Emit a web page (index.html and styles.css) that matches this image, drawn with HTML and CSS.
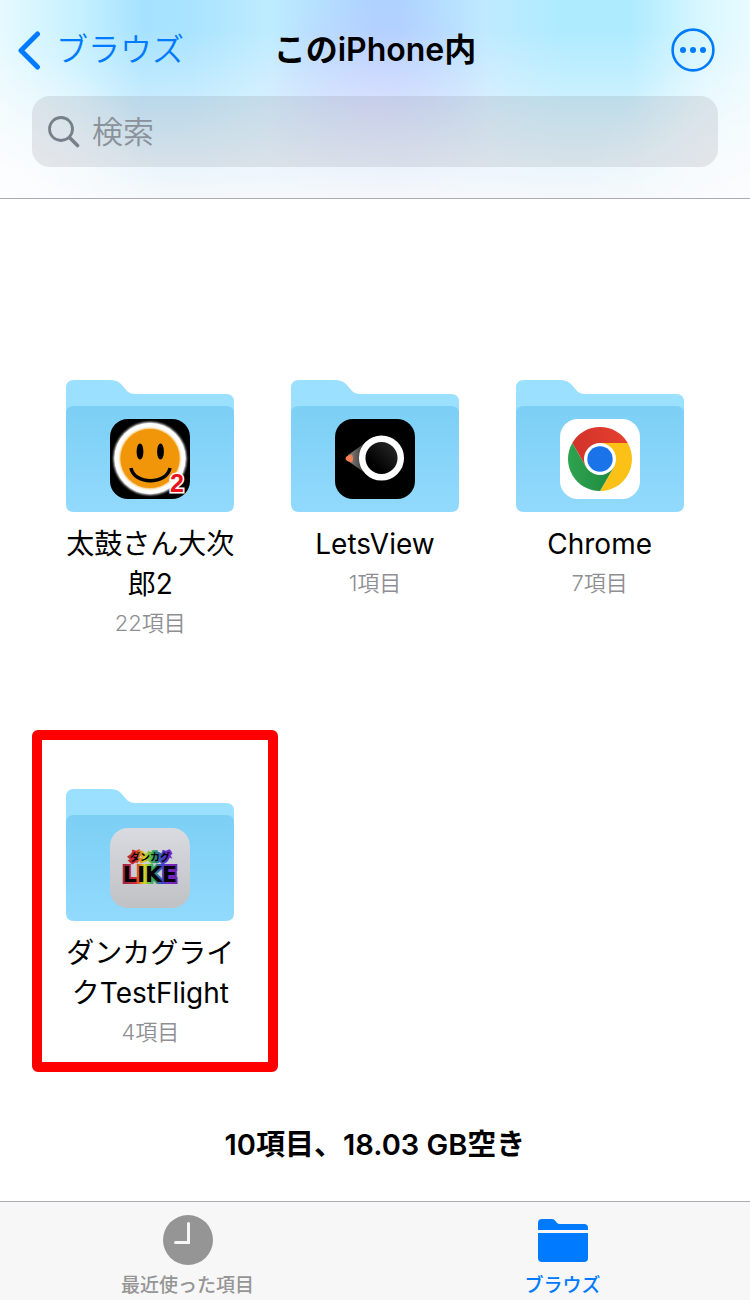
FILE: index.html
```html
<!DOCTYPE html>
<html lang="ja">
<head>
    <meta charset="UTF-8">
    <meta name="viewport" content="width=device-width, initial-scale=1.0">
    <title>このiPhone内</title>
    <link rel="stylesheet" href="styles.css">
</head>
<body>

    <!-- Shared folder shape -->
    <svg class="defs" width="0" height="0" aria-hidden="true">
        <defs>
            <linearGradient id="front" x1="0" y1="0" x2="0" y2="1">
                <stop offset="0" stop-color="#7ccff5"/>
                <stop offset="1" stop-color="#92dafd"/>
            </linearGradient>
            <linearGradient id="silver" x1="0" y1="0" x2="0" y2="1">
                <stop offset="0" stop-color="#d9dbe1"/>
                <stop offset="1" stop-color="#bfc1c5"/>
            </linearGradient>
            <linearGradient id="rainbow" gradientUnits="userSpaceOnUse" x1="11" y1="0" x2="69" y2="0">
                <stop offset="0" stop-color="#8e2450"/>
                <stop offset="0.25" stop-color="#d8282c"/>
                <stop offset="0.4" stop-color="#d9d320"/>
                <stop offset="0.55" stop-color="#2fae55"/>
                <stop offset="0.7" stop-color="#3a45c4"/>
                <stop offset="0.85" stop-color="#7c22c4"/>
                <stop offset="1" stop-color="#6d2a9a"/>
            </linearGradient>
            <linearGradient id="beam" x1="0" y1="0" x2="1" y2="0">
                <stop offset="0" stop-color="#8a8480"/>
                <stop offset="1" stop-color="#333"/>
            </linearGradient>
            <linearGradient id="lens" x1="0" y1="1" x2="1" y2="0">
                <stop offset="0.3" stop-color="#000"/>
                <stop offset="1" stop-color="#333"/>
            </linearGradient>
            <linearGradient id="chromeRed" x1="0" y1="0" x2="1" y2="0">
                <stop offset="0" stop-color="#d23329"/>
                <stop offset="1" stop-color="#e5402f"/>
            </linearGradient>
            <linearGradient id="chromeGreen" x1="0" y1="0" x2="1" y2="0">
                <stop offset="0" stop-color="#2fa350"/>
                <stop offset="1" stop-color="#1e8a3e"/>
            </linearGradient>
            <filter id="glow" x="-20%" y="-20%" width="140%" height="140%">
                <feGaussianBlur stdDeviation="1.2"/>
            </filter>
            <symbol id="folder" viewBox="0 0 168 132">
                <path fill="#9ce0ff" d="M0 8Q0 0 8 0H44Q51 0 55 4L61 11Q64 14 69 14H160Q168 14 168 22V60H0Z"/>
                <path fill="url(#front)" d="M0 34Q0 26 8 26H160Q168 26 168 34V124Q168 132 160 132H8Q0 132 0 124Z"/>
            </symbol>
        </defs>
    </svg>

    <header class="header">
        <nav class="navbar">
            <a class="back" href="#browse">
                <svg width="24" height="40" viewBox="0 0 24 40" aria-hidden="true">
                    <path d="M19.500 4L3 20.500L19.500 37" fill="none" stroke="currentColor" stroke-width="5" stroke-linecap="round" stroke-linejoin="round"/>
                </svg>
                <span>ブラウズ</span>
            </a>
            <h1 class="title">このiPhone内</h1>
            <button class="more" type="button" aria-label="その他">
                <svg width="44" height="44" viewBox="0 0 44 44" aria-hidden="true">
                    <circle cx="22" cy="22" r="20.400" fill="none" stroke="currentColor" stroke-width="2.600"/>
                    <g fill="currentColor">
                        <circle cx="12" cy="22" r="3"/>
                        <circle cx="22" cy="22" r="3"/>
                        <circle cx="32" cy="22" r="3"/>
                    </g>
                </svg>
            </button>
        </nav>
        <label class="search">
            <svg width="32" height="32" viewBox="0 0 32 32" aria-hidden="true">
                <circle cx="13" cy="13" r="11.500" fill="none" stroke="currentColor" stroke-width="2.800"/>
                <path d="M21.500 21.500L29.500 29.500" stroke="currentColor" stroke-width="3.600" stroke-linecap="round"/>
            </svg>
            <input type="search" placeholder="検索" aria-label="検索">
        </label>
    </header>

    <main class="content">
        <div class="folders">
            <a class="item" href="#taiko">
                <svg class="folder" viewBox="0 0 168 132" aria-hidden="true">
                    <use href="#folder"/>
                    <g transform="translate(44 39)">
                        <rect width="80" height="80" rx="18"/>
                        <circle cx="40" cy="39.500" r="36.500" fill="#fff" filter="url(#glow)"/>
                        <circle cx="40" cy="39.500" r="35.500" fill="#fff"/>
                        <circle cx="40" cy="39.500" r="30" fill="#f39c12" filter="url(#glow)"/>
                        <circle cx="40" cy="39.500" r="29.500" fill="#f09608"/>
                        <ellipse cx="30" cy="32.500" rx="3.400" ry="8"/>
                        <ellipse cx="50.500" cy="32.500" rx="3.400" ry="8"/>
                        <path d="M21 49C24 66 57 66 60 49" fill="none" stroke="#000" stroke-width="3.500"/>
                        <text class="badge" x="60" y="73">2</text>
                    </g>
                </svg>
                <span class="name">太鼓さん大次郎2</span>
                <span class="count">22項目</span>
            </a>

            <a class="item" href="#letsview">
                <svg class="folder" viewBox="0 0 168 132" aria-hidden="true">
                    <use href="#folder"/>
                    <g transform="translate(44 39)">
                        <rect width="80" height="80" rx="18"/>
                        <path d="M13 36L30 24V54L13 42Z" fill="url(#beam)"/>
                        <path d="M17 35.500L12 37Q9 39.500 12 42L17 43.500Q19 39.500 17 35.500Z" fill="#f57e54"/>
                        <circle cx="46.500" cy="39" r="19.300" fill="url(#lens)" stroke="#fff" stroke-width="6.500"/>
                    </g>
                </svg>
                <span class="name">LetsView</span>
                <span class="count">1項目</span>
            </a>

            <a class="item" href="#chrome">
                <svg class="folder" viewBox="0 0 168 132" aria-hidden="true">
                    <use href="#folder"/>
                    <g transform="translate(44 39)">
                        <rect width="80" height="80" rx="18" fill="#fff"/>
                        <g transform="translate(40 40)">
                            <path fill="url(#chromeRed)" d="M0 0L-13.860 8L-27.710 -16A32 32 0 0 1 27.710 -16H0Z"/>
                            <path fill="#fbc116" d="M0 0V-16H27.710A32 32 0 0 1 0 32L13.860 8Z"/>
                            <path fill="url(#chromeGreen)" d="M0 0L13.860 8L0 32A32 32 0 0 1 -27.710 -16L-13.860 8Z"/>
                            <circle r="16" fill="#fff"/>
                            <circle r="12.700" fill="#1a73e8"/>
                        </g>
                    </g>
                </svg>
                <span class="name">Chrome</span>
                <span class="count">7項目</span>
            </a>

            <a class="item selected" href="#testflight">
                <svg class="folder" viewBox="0 0 168 132" aria-hidden="true">
                    <use href="#folder"/>
                    <g transform="translate(44 39)">
                        <rect width="80" height="80" rx="18" fill="url(#silver)"/>
                        <text class="logo"><tspan class="logo-kana" x="40" y="33">ダンカグ</tspan><tspan class="logo-like" x="40" y="54">LIKE</tspan></text>
                    </g>
                </svg>
                <span class="name">ダンカグライクTestFlight</span>
                <span class="count">4項目</span>
            </a>
        </div>
        <p class="summary">10項目、18.03 GB空き</p>
    </main>

    <nav class="tabs">
        <a class="tab" href="#recents">
            <svg width="50" height="50" viewBox="0 0 50 50" aria-hidden="true">
                <circle cx="25" cy="25" r="25" fill="currentColor"/>
                <path d="M25.500 8.500V27.500H12.500" fill="none" stroke="#f7f7f7" stroke-width="3" stroke-linecap="round"/>
            </svg>
            <span>最近使った項目</span>
        </a>
        <a class="tab active" href="#browse">
            <svg width="50" height="50" viewBox="0 0 50 50" aria-hidden="true">
                <g fill="currentColor">
                    <path d="M0 15V8Q0 4 4 4H14Q16 4 17.500 6L19 8Q20 9 22 9H46Q50 9 50 13V15Z"/>
                    <path d="M0 18H50V43Q50 47 46 47H4Q0 47 0 43Z"/>
                </g>
            </svg>
            <span>ブラウズ</span>
        </a>
    </nav>

</body>
</html>
```
FILE: styles.css
```css
* { box-sizing: border-box; }
body { margin: 0; min-height: 100vh; display: flex; flex-direction: column; background-color: #fff; color: #000; font-family: Inter, "Noto Sans CJK JP", sans-serif; }
a { color: inherit; text-decoration: none; }
svg { display: block; flex: none; }
.defs { position: absolute; }

/* Header */
.header {
    padding: 8px 32px 31px;
    border-bottom: 1px solid #a9adb2;
    background:
        radial-gradient(ellipse 170px 150px at 0% 100%, rgba(255, 255, 255, 0.8), rgba(255, 255, 255, 0)),
        radial-gradient(ellipse 170px 150px at 100% 100%, rgba(255, 255, 255, 0.6), rgba(255, 255, 255, 0)),
        linear-gradient(to bottom, rgba(246, 249, 252, 0) 15%, rgba(246, 249, 252, 0.38) 48%, rgba(246, 249, 252, 0.8) 80%, #f5f8fb 100%),
        radial-gradient(ellipse 130px 120px at 50% 55%, rgba(200, 204, 255, 0.8), rgba(200, 204, 255, 0)),
        linear-gradient(to right, #e6faff 0%, #c4f0ff 11%, #a6e2ff 19%, #a8e3ff 25%, #beecff 36%, #acd2ff 50%, #acd2ff 53%, #bfeaff 65%, #aeebff 75%, #aeebff 84%, #daf7ff 94%, #e8fbff 100%);
}
.navbar { display: grid; grid-template-columns: 1fr auto 1fr; align-items: center; height: 84px; margin: 0 -14px 4px; }
.back { display: flex; align-items: center; gap: 14px; color: #007aff; font-size: 32px; font-weight: 350; line-height: 44px; }
.title { margin: 0; font-size: 32px; font-weight: 600; line-height: 44px; }
.more { justify-self: end; margin-right: 17px; padding: 0; border: 0; background: none; color: #007aff; }
.search { display: flex; align-items: center; gap: 12px; height: 71px; padding: 0 16px; border-radius: 18px; background-color: rgba(118, 118, 128, 0.16); color: #77808a; }
.search input { flex: 1; min-width: 0; padding: 0; border: 0; outline: 0; background: none; font: 350 31px Inter, "Noto Sans CJK JP", sans-serif; }
.search input::placeholder { color: #8a9199; }

/* Folder grid */
.content { flex: 1; }
.folders { display: grid; grid-template-columns: repeat(3, 1fr); row-gap: 147px; padding: 181px 38px 0; }
.item { position: relative; display: flex; flex-direction: column; align-items: center; }
.folder { width: 168px; height: 132px; margin-bottom: 12px; }
.name { width: 172px; font-size: 28px; line-height: 40px; text-align: center; word-break: break-all; }
.count { color: #8e8e93; font-size: 22px; font-weight: 350; line-height: 38px; }
.selected::after { content: ""; position: absolute; inset: -59px -15px -21px -6px; border: 10px solid #f00; border-radius: 6px; }
.badge { fill: #e8131c; stroke: #fff; stroke-width: 3px; paint-order: stroke; font: bold 25px "Liberation Sans", sans-serif; }
.logo { fill: #050008; stroke: url(#rainbow); stroke-width: 4px; paint-order: stroke; text-anchor: middle; }
.logo-kana { font: bold 10px "Noto Sans CJK JP", sans-serif; }
.logo-like { font: bold 22px "DejaVu Sans", sans-serif; }
.summary { margin: 74px 0 0; font-size: 29px; font-weight: 600; line-height: 40px; text-align: center; }

/* Tab bar */
.tabs { display: grid; grid-template-columns: 1fr 1fr; height: 99px; border-top: 1px solid #a9adb2; background-color: #f7f7f7; }
.tab { display: flex; flex-direction: column; align-items: center; padding-top: 13px; color: #959595; font-size: 19px; font-weight: 500; line-height: 42px; }
.active { color: #007aff; }
```
